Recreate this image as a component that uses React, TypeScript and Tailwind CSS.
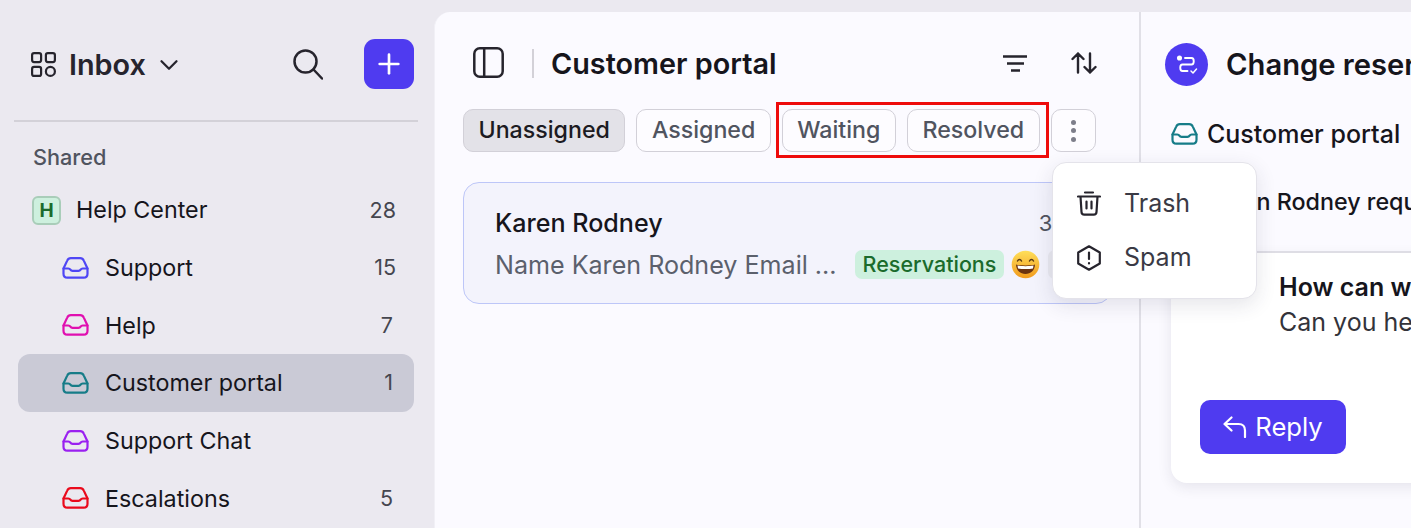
import { ChevronDown, Plus } from 'lucide-react'

const INBOXES = [
  { label: 'Support', count: '15', color: '#4f46f5', active: false },
  { label: 'Help', count: '7', color: '#e00fb0', active: false },
  { label: 'Customer portal', count: '1', color: '#167c88', active: true },
  { label: 'Support Chat', count: '', color: '#9a20f0', active: false },
  { label: 'Escalations', count: '5', color: '#ea0a1c', active: false },
]

function InboxIcon({ color, className }: { color: string; className?: string }) {
  return (
    <svg className={className} viewBox="0 0 27 22" fill="none" stroke={color} strokeWidth="2.2" strokeLinejoin="round" strokeLinecap="round">
      <path d="M1.5 11.5 5.2 3.6C5.9 2 7 1.2 8.8 1.2h9.4c1.8 0 2.9.8 3.6 2.4l3.7 7.9v5.3c0 2.4-1.4 3.9-3.8 3.9H5.3c-2.4 0-3.8-1.5-3.8-3.9v-5.3Z" />
      <path d="M1.5 11.5h4.8c1 0 1.6.4 2.1 1.2.5.8 1.1 1.2 2.1 1.2h6c1 0 1.6-.4 2.1-1.2.5-.8 1.1-1.2 2.1-1.2h4.8" />
    </svg>
  )
}

function Emoji() {
  return (
    <svg className="w-[29px] h-[29px] shrink-0" viewBox="0 0 29 29">
      <defs>
        <linearGradient id="face" x1="0" y1="0" x2="0" y2="1">
          <stop offset="0" stopColor="#ffdf5a" />
          <stop offset="1" stopColor="#f19a1c" />
        </linearGradient>
      </defs>
      <circle cx="14.5" cy="14.5" r="13.8" fill="url(#face)" />
      <path d="M6.5 11c1-2 3-2 4 0M18.5 11c1-2 3-2 4 0" fill="none" stroke="#5b3a14" strokeWidth="1.5" strokeLinecap="round" />
      <path d="M5 14.5c3 1.2 16 1.2 19 0-.3 6-4.3 9.5-9.5 9.5S5.3 20.5 5 14.5Z" fill="#6b3310" />
      <path d="M6.5 15.6c3 .8 13 .8 16 0l-.5 2.8c-4 .8-11 .8-15 0Z" fill="#fff" />
    </svg>
  )
}

function Tab({ label, active }: { label: string; active?: boolean }) {
  return (
    <button
      className={`h-[43px] px-[14.5px] rounded-[10px] border border-[#d2d0d8] text-[23.2px] font-medium leading-none ${
        active ? 'bg-[#e3e2e8] text-[#1c1b22]' : 'bg-[#fdfcff] text-[#50545f]'
      }`}
    >
      {label}
    </button>
  )
}

export default function App() {
  return (
    <div className="w-[1411px] h-[528px] overflow-hidden flex bg-[#ebe9f0] text-[#16151c] font-['Inter',sans-serif] relative">
      {/* Sidebar */}
      <aside className="w-[434px] shrink-0 flex flex-col">
        <div className="h-[122px] ml-[14px] mr-[16px] border-b-2 border-[#d3d1d8] pt-[39px] pl-[17px] pr-[4px] flex items-start">
          <div className="h-[50px] flex items-center">
            <svg className="w-[25px] h-[25px]" viewBox="0 0 25 25" fill="none" stroke="#26242d" strokeWidth="2.2">
              <rect x="1.1" y="1.1" width="9" height="9" rx="2" />
              <rect x="14.9" y="1.1" width="9" height="9" rx="2" />
              <rect x="1.1" y="14.9" width="9" height="9" rx="2" />
              <circle cx="19.4" cy="19.4" r="4.5" />
            </svg>
            <span className="ml-[13px] text-[28.8px] font-semibold text-[#26242d] leading-none mt-[2px]">Inbox</span>
            <ChevronDown className="ml-[8px] mt-[1px] w-[30px] h-[30px] text-[#26242d]" strokeWidth={1.8} />
          </div>
          <div className="ml-auto h-[50px] flex items-center gap-[41px]">
            <svg className="w-[30px] h-[31px]" viewBox="0 0 30 31" fill="none" stroke="#26242d" strokeWidth="2.5" strokeLinecap="round">
              <circle cx="12.5" cy="12.5" r="11" />
              <path d="M20.5 20.5 29 29.5" />
            </svg>
            <button className="w-[50px] h-[50px] rounded-[11px] bg-[#4f3bf0] flex items-center justify-center">
              <Plus className="w-[32px] h-[32px] text-white" strokeWidth={2} />
            </button>
          </div>
        </div>

        <div className="pl-[33px] mt-[21px] h-[29px] flex items-center text-[21.7px] font-medium text-[#50545f] leading-none">Shared</div>

        <nav className="mt-[9.5px] ml-[18px] mr-[20px] flex flex-col">
          <div className="h-[57.6px] flex items-center pl-[14px] pr-[18px]">
            <span className="w-[29px] h-[29px] rounded-[6px] bg-[#cdf0de] border-2 border-[#a9cdb9] text-[#1b6b2c] font-bold text-[19px] flex items-center justify-center leading-none">H</span>
            <span className="ml-[15px] mb-[1px] text-[23.3px] leading-none">Help Center</span>
            <span className="ml-auto text-[21.5px] text-[#45464f] leading-none">28</span>
          </div>
          {INBOXES.map(({ label, count, color, active }) => (
            <div key={label} className={`h-[57.6px] flex items-center pl-[44px] pr-[18px] rounded-[12px] ${active ? 'bg-[#cacad6]' : ''}`}>
              <InboxIcon color={color} className="w-[27px] h-[22px] shrink-0" />
              <span className="ml-[16px] text-[23.3px] leading-none">{label}</span>
              <span className={`ml-auto text-[21.5px] text-[#45464f] leading-none ${count.length === 1 ? 'pr-[3px]' : ''}`}>{count}</span>
            </div>
          ))}
        </nav>
      </aside>

      {/* Panel */}
      <main className="mt-[12px] flex-1 min-w-0 flex bg-[#fbfaff] rounded-tl-[16px] border-l border-[#f1f0f6]">
        {/* Conversation list */}
        <section className="w-[706px] shrink-0 border-r-2 border-[#e1e0e7] flex flex-col px-[28px]">
          <div className="h-[97px] flex items-center pt-[8px]">
            <svg className="ml-[10px] mb-[5px] w-[31px] h-[31px]" viewBox="0 0 31 31" fill="none" stroke="#26242d" strokeWidth="2.5">
              <rect x="1.3" y="1.3" width="28.4" height="28.4" rx="5.5" />
              <path d="M11.2 1.3v28.4" />
            </svg>
            <span className="ml-[28px] mb-[3px] w-[2px] h-[29px] bg-[#d3d1d8]" />
            <span className="ml-[17px] text-[28.8px] font-semibold leading-none text-[#16151c]">Customer portal</span>
            <svg className="ml-auto mb-[3px] w-[26px] h-[17px]" viewBox="0 0 26 17" fill="none" stroke="#26242d" strokeWidth="2.4">
              <path d="M1 1.5h24M5 8.5h17M9 15.5h9" />
            </svg>
            <svg className="ml-[43px] mr-[14px] mb-[3px] w-[26px] h-[22px]" viewBox="0 0 26 22" fill="none" stroke="#26242d" strokeWidth="2.4" strokeLinecap="round" strokeLinejoin="round">
              <path d="M7 20.5V1.5M1.5 7 7 1.5 12.5 7M19 1.5v19M13.5 15l5.5 5.5 5.5-5.5" />
            </svg>
          </div>

          <div className="flex gap-[11px]">
            <Tab label="Unassigned" active />
            <Tab label="Assigned" />
            <Tab label="Waiting" />
            <Tab label="Resolved" />
            <button className="w-[45px] h-[43px] rounded-[10px] border border-[#d2d0d8] bg-[#fdfcff] flex flex-col items-center justify-center gap-[3.5px]">
              <span className="w-[5px] h-[5px] rounded-full bg-[#7d7e8a]" />
              <span className="w-[5px] h-[5px] rounded-full bg-[#7d7e8a]" />
              <span className="w-[5px] h-[5px] rounded-full bg-[#7d7e8a]" />
            </button>
          </div>

          <div className="mt-[30px] h-[122px] w-[649px] rounded-[16px] border border-[#bdc6f8] bg-[#f3f3fc] pl-[31px] pr-[10px] pt-[24px]">
            <div className="flex items-center h-[32px]">
              <span className="text-[25.1px] font-medium leading-none mt-[1px]">Karen Rodney</span>
              <span className="ml-[376px] text-[22px] text-[#50545f] leading-none">3d</span>
            </div>
            <div className="flex items-center mt-[11px] h-[29px]">
              <span className="text-[25.1px] text-[#5b606c] leading-none w-[360px] whitespace-nowrap mt-[3px]">Name Karen Rodney Email ...</span>
              <span className="h-[29px] w-[149px] rounded-[7px] bg-[#cdf0de] text-[#1b6b2c] text-[21.5px] font-medium flex items-center justify-center leading-none">Reservations</span>
              <span className="ml-[7px]"><Emoji /></span>
              <span className="ml-[8px] w-[40px] h-[29px] rounded-[7px] bg-[#e8e8f0]" />
            </div>
          </div>
        </section>

        {/* Conversation detail */}
        <section className="flex-1 min-w-0 overflow-hidden pl-[24px]">
          <div className="h-[97px] flex items-center whitespace-nowrap pt-[8px]">
            <span className="w-[43px] h-[43px] rounded-full bg-[#4f3bf0] flex items-center justify-center shrink-0">
              <svg className="w-[24px] h-[24px]" viewBox="0 0 24 24" fill="none" stroke="#fff" strokeWidth="1.9" strokeLinecap="round" strokeLinejoin="round">
                <circle cx="4.5" cy="5" r="1.6" fill="#fff" />
                <path d="M10 5h6.5c3 0 3 6.500 0 6.500H7.500c-3 0-3 6.500 0 6.500h5" />
                <path d="M16 18l2 2 3.5-4" strokeWidth="1.5" />
              </svg>
            </span>
            <span className="ml-[18px] text-[29.2px] font-semibold leading-none">Change reservation request</span>
          </div>
          <div className="h-[44px] mt-[3px] flex items-center pl-[6px] whitespace-nowrap">
            <InboxIcon color="#167c88" className="w-[27px] h-[22px] shrink-0" />
            <span className="ml-[9px] text-[25px] font-medium leading-none">Customer portal</span>
          </div>
          <div className="h-[36px] mt-[28px] flex items-center pl-[40px] whitespace-nowrap text-[23.3px] font-medium leading-none">Karen Rodney requested a change</div>
          <div className="mt-[31px] border-t-2 border-[#e3e2e9] h-0" />
          <div className="ml-[6px] w-[400px] h-[230px] bg-white rounded-bl-[16px] shadow-[0_4px_14px_rgba(40,40,70,0.10)] pl-[29px] whitespace-nowrap">
            <div className="pl-[79px] pt-[19px] text-[25px] font-semibold leading-[30px]">How can we help you?</div>
            <div className="pl-[79px] mt-[5px] text-[25px] text-[#33333a] leading-[30px]">Can you help me change my booking?</div>
            <button className="mt-[63px] w-[146px] h-[54px] rounded-[10px] bg-[#4f3bf0] text-white text-[25.6px] flex items-center justify-center gap-[8px] leading-none">
              <svg className="w-[24px] h-[22px]" viewBox="0 0 24 22" fill="none" stroke="#fff" strokeWidth="2.2" strokeLinecap="round" strokeLinejoin="round">
                <path d="M8.5 1.5 1.5 8l7 6.500M1.500 8h14c4 0 6.500 2.500 6.500 6.500V21" />
              </svg>
              Reply
            </button>
          </div>
        </section>
      </main>

      {/* Highlight frame */}
      <div className="absolute left-[776px] top-[102px] w-[273px] h-[56px] border-[3px] border-[#ee0b0b] pointer-events-none" />

      {/* More menu */}
      <div className="absolute left-[1052px] top-[162px] w-[205px] h-[137px] rounded-[14px] bg-white border border-[#e4e3ea] shadow-[0_6px_20px_rgba(40,40,70,0.12)] flex flex-col justify-center pl-[24px]">
        <div className="h-[54px] flex items-center gap-[23px]">
          <svg className="w-[24px] h-[25px]" viewBox="0 0 24 25" fill="none" stroke="#26242d" strokeWidth="2.2" strokeLinecap="round" strokeLinejoin="round">
            <path d="M1 5.5h22M8 1.5h8M3.5 5.5l1 15.5c.1 1.6 1.2 2.7 2.8 2.7h9.400c1.600 0 2.700-1.100 2.800-2.700l1-15.500M9.500 10.500v7M14.500 10.500v7" />
          </svg>
          <span className="text-[25px] text-[#3a3a45] leading-none">Trash</span>
        </div>
        <div className="h-[54px] flex items-center gap-[23px]">
          <svg className="w-[24px] h-[26px]" viewBox="0 0 24 26" fill="none" stroke="#26242d" strokeWidth="2.2" strokeLinecap="round" strokeLinejoin="round">
            <path d="M12 1.3 22.8 7.5v11L12 24.7 1.2 18.500v-11L12 1.300Z" />
            <path d="M12 7.500v6.500M12 18v.4" />
          </svg>
          <span className="text-[25px] text-[#3a3a45] leading-none">Spam</span>
        </div>
      </div>
    </div>
  )
}
